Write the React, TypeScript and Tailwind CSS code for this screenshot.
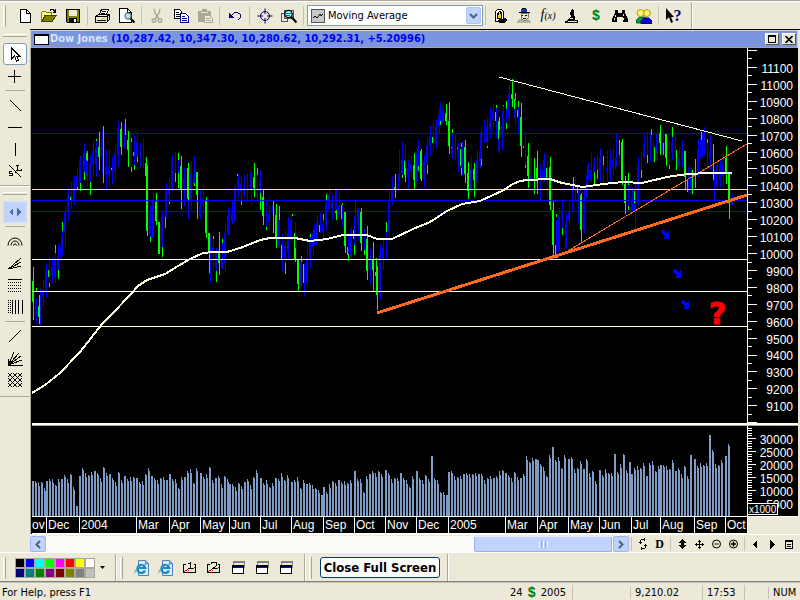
import { useState } from 'react';
import type { ReactNode } from 'react';

// high / low bars of the session, one "x,top,bottom" entry each
const UP_BARS = `
35,300,316 36,298,323 40,289,327 42,290,296 43,280,307 45,270,290 46,263,298 49,257,283 51,266,275 52,257,283
54,260,277 55,253,283 57,257,270 58,243,270 60,247,257 61,237,262 62,231,255 64,212,232 65,206,246 67,196,212
68,190,221 71,182,209 73,182,202 74,176,205 76,176,188 77,169,188 79,161,184 80,156,183 83,153,175 84,143,172
86,160,176 87,161,187 89,165,181 90,156,182 92,151,164 93,140,176 95,148,164 96,139,177 101,134,156 102,130,174
105,167,175 106,150,189 108,167,175 109,149,185 112,157,185 114,153,170 115,146,180 117,128,156 118,121,167
124,124,148 125,135,148 131,142,167 134,136,165 136,142,156 137,131,157 140,143,167 143,138,168 149,210,235
150,205,237 152,201,237 153,193,239 161,217,245 162,212,247 165,190,217 166,183,218 168,188,194 169,177,202
171,159,191 172,155,191 175,152,173 178,158,173 184,168,206 183,178,190 188,200,219 190,173,199 191,161,210
194,156,185 193,173,184 199,206,216 200,190,219 203,185,214 202,199,204 210,237,283 213,236,268 212,248,252
215,253,267 216,248,271 222,243,269 221,259,268 224,233,263 225,223,271 227,215,235 228,208,235 229,210,235
231,213,221 232,201,224 234,187,221 235,184,221 237,180,189 238,174,197 241,177,201 240,184,192 244,175,197
243,187,196 247,173,200 250,172,190 251,169,205 253,177,188 257,175,200 259,179,193 260,170,193 266,202,227
269,205,231 268,214,222 272,205,213 278,221,246 279,220,248 281,245,260 282,234,271 285,230,263 284,246,258
288,217,259 287,233,252 290,220,240 291,215,244 295,222,248 300,262,285 301,262,287 304,263,296 306,258,283
307,244,286 309,240,259 310,237,268 312,233,247 313,229,255 314,225,245 316,222,245 317,215,245 320,213,233
323,220,244 322,224,232 325,204,226 326,200,231 328,195,210 329,187,210 332,194,220 331,201,208 335,190,210
336,190,210 338,205,215 339,193,220 342,203,227 348,234,254 350,230,256 351,226,261 354,216,245 355,201,240
357,210,225 358,208,241 364,229,250 369,259,270 370,249,284 379,253,296 380,244,300 382,248,258 383,240,270
386,232,261 388,200,232 389,193,242 391,190,200 392,176,205 398,174,190 399,150,182 401,160,173 402,142,175
404,160,170 405,145,168 407,168,177 408,160,189 411,156,177 410,164,171 416,153,182 417,148,182 418,140,166
423,160,179 424,155,187 426,145,163 427,138,165 429,136,147 430,126,156 433,122,150 435,125,144 436,120,148
438,115,127 439,107,133 440,102,121 442,109,123 443,102,123 452,133,159 451,147,154 455,135,161 457,147,158
458,143,172 461,147,168 462,141,176 470,169,190 471,156,192 476,159,182 477,150,183 479,152,161 480,132,168
481,126,159 484,120,143 486,126,142 487,117,146 489,118,130 490,107,138 492,111,120 493,103,127 496,107,138
498,139,151 499,130,154 501,126,137 502,111,150 503,105,135 506,109,123 508,94,117 509,84,127 515,100,125
514,109,118 518,107,133 525,133,165 531,157,183 530,175,180 540,163,200 542,170,180 543,160,180 544,153,182
547,160,197 556,220,255 558,215,251 559,208,251 562,201,228 561,211,219 565,222,247 566,214,249 568,211,220
569,203,228 572,183,212 575,176,202 578,190,224 583,203,230 584,190,233 586,175,198 587,165,198 588,162,180
590,170,180 591,153,182 594,158,172 593,165,173 597,155,170 599,158,173 600,149,182 603,165,183 606,168,172
607,151,183 610,150,183 609,160,174 613,148,175 612,160,167 615,158,170 616,134,167 619,155,165 628,185,206
632,187,211 631,198,210 635,183,229 637,166,203 638,157,205 641,152,170 643,145,158 644,135,158 647,132,155
650,132,162 651,129,145 653,140,162 656,134,153 657,128,162 662,142,152 663,129,155 669,141,165 672,137,160
671,142,152 675,132,157 679,147,172 678,158,166 682,140,168 681,152,160 688,167,193 691,167,195 690,177,188
697,149,175 698,140,177 700,138,158 702,132,157 703,130,150 704,127,155 707,139,170 710,135,170 709,150,158
714,170,202 716,165,186 717,160,190 719,166,180 720,159,187 723,154,187 722,162,176 731,200,205 732,194,205
559,240,251 634,203,211 667,140,150`;

const DOWN_BARS = `
32,281,302 33,267,320 36,288,292 38,306,317 39,295,324 49,283,287 48,270,277 55,245,253 58,270,279 62,222,231
70,197,201 77,187,189 80,183,191 84,172,180 86,153,160 87,151,161 90,182,195 96,139,141 98,147,157 99,132,170
103,126,183 111,168,170 120,129,147 121,122,155 125,119,135 127,140,150 128,131,167 131,138,142 131,167,172
133,152,156 134,165,170 137,157,162 145,163,176 146,157,231 147,165,236 150,237,242 155,202,221 156,193,225
158,222,254 159,222,254 162,247,257 165,217,228 169,202,204 175,173,182 178,153,160 178,173,188 180,166,189
181,156,209 187,168,199 188,163,200 194,183,186 196,172,195 197,172,219 205,201,233 206,197,238 208,233,253
209,233,273 213,236,239 216,271,282 218,253,263 219,232,275 222,239,243 241,201,205 237,174,176 253,177,188
254,163,197 257,168,175 260,193,210 262,197,216 263,190,225 266,227,230 273,201,233 275,215,237 276,204,248
279,206,220 281,245,259 285,263,274 292,214,216 294,233,259 295,248,262 297,260,284 298,260,291 301,256,262
303,264,283 310,234,237 319,225,232 323,214,220 326,194,200 335,211,213 336,210,220 341,205,219 342,203,205
344,212,246 345,212,253 347,247,255 348,254,261 353,230,239 354,245,255 360,212,243 361,208,251 364,250,255
366,239,271 367,226,280 372,260,270 373,242,291 375,272,276 376,258,295 377,266,310 386,222,232 395,174,198
394,187,190 402,175,178 404,161,175 405,168,182 413,165,180 414,153,189 418,166,171 420,151,179 421,149,181
427,165,174 432,137,143 440,121,125 445,113,121 446,104,125 448,121,146 449,102,154 452,129,133 451,147,148
457,148,149 460,149,166 461,143,147 461,168,175 464,147,174 465,140,183 467,173,191 468,162,199 473,169,180
474,163,197 481,159,166 487,146,148 495,112,121 496,105,108 498,121,139 499,117,130 503,105,106 506,101,109
506,123,129 511,94,99 512,79,107 514,99,109 515,93,100 517,110,117 518,101,107 520,117,146 521,103,157
523,146,148 525,165,168 527,156,176 528,143,188 534,158,194 536,168,180 537,151,194 546,168,180 549,167,205
550,157,210 552,210,245 553,201,256 555,245,255 556,214,217 562,228,235 573,177,190 577,187,193 580,195,230
581,193,242 594,172,185 597,170,179 603,156,165 619,140,155 621,142,180 622,139,185 624,184,203 625,176,214
628,173,185 628,206,210 634,191,203 641,170,178 647,155,163 651,129,135 654,147,162 660,125,155 659,133,143
663,143,155 665,134,158 666,134,166 669,165,169 672,127,137 676,150,170 684,151,177 685,151,189 687,180,192
692,170,194 695,159,188 701,132,140 707,139,143 713,144,180 725,158,173 726,146,184 728,173,203 729,173,219`;

const toPath = (bars: string) =>
    bars
        .trim()
        .split(/\s+/)
        .map((bar) => {
            const [x, top, bottom] = bar.split(',').map(Number);
            return `M${x + 0.5} ${top}V${bottom}`;
        })
        .join('');

const MOVING_AVERAGE =
    '32,393 45,385 60,373 80,352 102,324 113,313 130,295 138,286 147,280 165,274 178,266 190,259 203,253 213,252 227,252 243,247 260,240 270,238 295,238 310,241 327,239 343,235 367,235 377,239 392,239 413,229 430,222 447,211 462,204 480,201 502,191 513,184 520,181 527,180 550,179 562,183 583,187 603,184 623,182 642,183 667,177 687,174 710,173 732,173';

interface Month {
    label: string;
    start: number;
    end: number;
    volume: number[];
}

const MONTHS: Month[] = [
    { label: 'ov', start: 32, end: 46, volume: [35, 35, 34, 34, 28] },
    { label: 'Dec', start: 46, end: 79, volume: [35, 37, 37, 31, 37, 37, 41, 37, 42, 29, 10] },
    { label: '2004', start: 79, end: 136, volume: [40, 48, 43, 41, 44, 45, 43, 38, 49, 43, 42, 38, 34, 44, 36, 40, 37, 39, 39] },
    { label: 'Mar', start: 136, end: 169, volume: [38, 34, 35, 42, 48, 40, 38, 36, 38, 39, 36] },
    { label: 'Apr', start: 169, end: 200, volume: [42, 37, 37, 28, 39, 39, 45, 47, 33, 48] },
    { label: 'May', start: 200, end: 229, volume: [43, 39, 42, 49, 36, 38, 40, 32, 40, 37] },
    { label: 'Jun', start: 229, end: 260, volume: [32, 32, 29, 33, 30, 34, 37, 31, 39, 46] },
    { label: 'Jul', start: 260, end: 291, volume: [38, 33, 36, 29, 33, 38, 37, 43, 36, 41] },
    { label: 'Aug', start: 291, end: 323, volume: [34, 36, 39, 28, 36, 32, 33, 31, 28, 26, 21] },
    { label: 'Sep', start: 323, end: 354, volume: [29, 24, 32, 35, 33, 36, 34, 35, 33, 36] },
    { label: 'Oct', start: 354, end: 385, volume: [45, 37, 37, 24, 40, 42, 45, 43, 45, 42] },
    { label: 'Nov', start: 385, end: 416, volume: [46, 43, 37, 38, 38, 43, 38, 36, 29, 40] },
    { label: 'Dec', start: 416, end: 448, volume: [45, 38, 36, 41, 37, 60, 38, 36, 24, 24, 21] },
    { label: '2005', start: 448, end: 505, volume: [44, 45, 40, 39, 40, 42, 43, 42, 42, 43, 42, 42, 36, 38, 40, 38, 40, 45, 46] },
    { label: 'Mar', start: 505, end: 537, volume: [43, 41, 38, 44, 39, 38, 42, 60, 54, 58, 57] },
    { label: 'Apr', start: 537, end: 568, volume: [56, 52, 49, 40, 61, 69, 56, 59, 48, 61] },
    { label: 'May', start: 568, end: 599, volume: [57, 59, 47, 48, 55, 47, 57, 43, 45, 35] },
    { label: 'Jun', start: 599, end: 631, volume: [46, 41, 47, 43, 43, 62, 44, 52, 62, 46, 54] },
    { label: 'Jul', start: 631, end: 660, volume: [42, 48, 50, 48, 53, 40, 53, 55, 45, 50] },
    { label: 'Aug', start: 660, end: 694, volume: [51, 51, 50, 47, 56, 45, 48, 42, 50, 40, 61] },
    { label: 'Sep', start: 694, end: 725, volume: [57, 50, 53, 51, 53, 81, 66, 52, 51, 56] },
    { label: 'Oct', start: 725, end: 747, volume: [60, 72] },
];

const VOLUME_PATH = MONTHS.map(({ start, volume }) =>
    volume
        .map((v, i) => {
            const x = start + i * 3 + 0.5;
            return `M${x} 90v-${v}M${x + 1} 90v-${v - ((i * 7) % 5)}`;
        })
        .join('')
).join('');

const MONTH_COLUMNS = MONTHS.map((m) => `minmax(0,${m.end - m.start}fr)`).join(' ');

const PRICES = Array.from({ length: 21 }, (_, i) => 11100 - i * 100);
const PRICE_TICKS = Array.from({ length: 45 }, (_, i) => {
    const y = Math.round(50 + i * 8.46);
    return `M0 ${y + 0.5}h${i % 2 ? 4 : 9}`;
}).join('');
const VOLUME_TICKS = Array.from({ length: 31 }, (_, i) => `M0 ${Math.round(12 + (i - 4) * 2.6) + 0.5}h${i % 5 === 4 ? 8 : 4}`).join('');

const SWATCHES = [
    ['Black', 'bg-[#000000]'],
    ['Blue', 'bg-[#0000ff]'],
    ['Cyan', 'bg-[#00ffff]'],
    ['Lime', 'bg-[#00ff00]'],
    ['Magenta', 'bg-[#ff00ff]'],
    ['Red', 'bg-[#ff0000]'],
    ['Yellow', 'bg-[#ffff00]'],
    ['White', 'bg-[#ffffff]'],
    ['Navy', 'bg-[#000080]'],
    ['Teal', 'bg-[#008080]'],
    ['Green', 'bg-[#008000]'],
    ['Purple', 'bg-[#800080]'],
    ['Maroon', 'bg-[#800000]'],
    ['Olive', 'bg-[#808000]'],
    ['Gray', 'bg-[#808080]'],
    ['Silver', 'bg-[#c0c0c0]'],
];

function Icon({ children, smooth }: { children: ReactNode; smooth?: boolean }) {
    return (
        <svg width="16" height="16" viewBox="0 0 16 16" fill="none" stroke="#000" shapeRendering={smooth ? 'auto' : 'crispEdges'} aria-hidden="true">
            {children}
        </svg>
    );
}

function Tool({ label, children }: { label: string; children: ReactNode }) {
    return (
        <button type="button" aria-label={label} title={label} className="w-6 h-6 shrink-0 flex items-center justify-center">
            {children}
        </button>
    );
}

function SmallTool({ label, children }: { label: string; children: ReactNode }) {
    return (
        <button type="button" aria-label={label} title={label} className="w-[17px] h-4 shrink-0 flex items-center justify-center">
            {children}
        </button>
    );
}

function Sep() {
    return <div className="w-px h-[19px] ml-[2px] mr-[3px] shrink-0 bg-[#c5c2b8]" />;
}

function Grip() {
    return <div className="w-[3px] h-[22px] shrink-0 border-l border-white border-r border-r-[#aca899]" />;
}

function WindowIcon() {
    return (
        <Icon>
            <path d="M3 1.500h12M3 2.500h12M14.500 3v5M3.500 2v3" stroke="#808080" />
            <path d="M2.500 5.500h11v8h-11z" fill="#fff" />
            <path d="M2 6.500h12" />
            <path d="M3 7.500h10" stroke="#00f" />
        </Icon>
    );
}

function BrowserIcon() {
    return (
        <Icon smooth>
            <path d="M4.500 .5h7l3 3v12h-10z" fill="#d8ecfa" stroke="#5580b8" />
            <path d="M11.500 .5v3h3" stroke="#5580b8" />
            <path d="M11 10.500a4 4 0 1 1 .2-2.500H4.500" stroke="#1b83c8" strokeWidth="2.200" />
            <path d="M.8 13C1 9 7 4 13 4" stroke="#4aa9e0" />
        </Icon>
    );
}

function NumberedChart({ n }: { n: string }) {
    return (
        <Icon>
            <path d="M2 11.500h1M3 10.500h2M5 9.500h1M6 10.500h1M11 8.500h1M12 7.500h1" stroke="#f00" />
            <path d="M4 4.500H1.500v8h12v-8H12" />
            {n === '1' ? <path d="M6 3.500h2M8.500 2v6M6 8.500h5" /> : <path d="M5.500 4V2.500h5v3M9 6.500h1M7 7.500h2M6 8.500h5" />}
        </Icon>
    );
}

function TopToolbar() {
    const [indicator, setIndicator] = useState('Moving Average');

    return (
        <header className="h-[29px] shrink-0 flex items-center border-t border-[#aca899] shadow-[inset_0_1px_0_#fff] pl-[3px] pt-px overflow-hidden">
            <Grip />
            <div className="w-[7px] shrink-0" />
            <Tool label="New">
                <Icon>
                    <path d="M3.500 1.500h6l4 4v9h-10zM9.500 1.500v4h4" fill="#fff" />
                </Icon>
            </Tool>
            <Tool label="Open">
                <Icon>
                    <path d="M.5 13V4.500l1-1h3l1 1h5V8H4z" fill="#ffff80" stroke="#808000" />
                    <path d="M1 13.500L4 7.500h11l-4 6z" fill="#808000" stroke="#404000" />
                    <path d="M9 2.500l1-1h2l2 2M14.500 1v3H12" />
                </Icon>
            </Tool>
            <Tool label="Save">
                <Icon>
                    <path d="M1.500 1.500h13v13h-12l-1-1z" fill="#808000" />
                    <path d="M4 2h8v6H4z" fill="#ece9d8" stroke="none" />
                    <path d="M4 10h8v4H4z" fill="#000" stroke="none" />
                    <path d="M9 11h2v3H9z" fill="#fff" stroke="none" />
                </Icon>
            </Tool>
            <Sep />
            <Tool label="Print">
                <Icon>
                    <path d="M4.500 6l2-4.500h7l-2 5" fill="#fff" />
                    <path d="M7 3.500h4M6 5.500h4" />
                    <path d="M.5 8.500l3-2h11v5l-3 3H.5z" fill="#ece9d8" />
                    <path d="M1 8.500h11v5M12 8.500l2-2M2 12.500h9" />
                    <path d="M7 10.500h3" stroke="#cc0" />
                </Icon>
            </Tool>
            <Tool label="Print preview">
                <Icon>
                    <path d="M.5 .5h8l4 4v10H.5zM8.500 .5v4h4" fill="#fff" />
                    <g shapeRendering="auto">
                        <circle cx="9" cy="8" r="3.200" fill="#aee8ee" stroke="#555" />
                        <path d="M11.500 10.500l4 4" strokeWidth="2.200" />
                    </g>
                </Icon>
            </Tool>
            <Sep />
            <Tool label="Cut">
                <Icon smooth>
                    <path d="M5 1l1 4 4 6M11 1l-1 4-4 6" stroke="#aca899" strokeWidth="1.400" />
                    <circle cx="5" cy="12.500" r="1.800" stroke="#aca899" strokeWidth="1.400" />
                    <circle cx="11" cy="12.500" r="1.800" stroke="#aca899" strokeWidth="1.400" />
                </Icon>
            </Tool>
            <Tool label="Copy">
                <Icon>
                    <path d="M1.500 1.500h5l2 2v7h-7z" fill="#fff" />
                    <path d="M3 4.500h3M3 6.500h4M3 8.500h4" />
                    <path d="M7.500 5.500h5l3 3v6h-8z" fill="#fff" stroke="#000080" />
                    <path d="M9 8.500h3M9 10.500h5M9 12.500h5" stroke="#000080" />
                </Icon>
            </Tool>
            <Tool label="Paste">
                <Icon>
                    <path d="M1 3h13v11H1zM5 1h5v2H5z" fill="#aca899" stroke="none" />
                    <path d="M4 4.500h7" stroke="#ece9d8" />
                    <path d="M7.500 7.500h5l3 3v4h-8z" fill="#ece9d8" stroke="#aca899" />
                    <path d="M9 10.500h4M9 12.500h5" stroke="#aca899" />
                </Icon>
            </Tool>
            <Sep />
            <Tool label="Undo">
                <Icon>
                    <path d="M2 5v5h5z" fill="#000080" stroke="none" />
                    <path d="M4 7.500h1M5 6.500h1M6 5.500h1M7 4.500h4M11 5.500h2M13.500 6v4M12 10.500h1M11 11.500h1" stroke="#000080" />
                </Icon>
            </Tool>
            <Sep />
            <Tool label="Crosshair">
                <Icon smooth>
                    <circle cx="8" cy="8" r="4.500" stroke="#000060" />
                    <path d="M8 .5v5.500M8 10v5.500M.5 8H6M10 8h5.500" stroke="#000060" />
                </Icon>
            </Tool>
            <Tool label="Zoom to data">
                <Icon>
                    <path d="M.5 5.500h6v8h-6zM3.500 2.500h9v8h-9z" fill="#ece9d8" stroke="#555" />
                    <g shapeRendering="auto">
                        <circle cx="7.500" cy="6" r="3.700" fill="#9ff" strokeWidth="1.300" />
                        <path d="M10.500 9l5 5.500" strokeWidth="2.200" />
                    </g>
                    <path d="M5 5.500h5M5 7.500h4" stroke="#088" />
                </Icon>
            </Tool>
            <Sep />
            <div className="relative w-[176px] h-[21px] shrink-0 flex items-center">
                <select
                    aria-label="Indicator"
                    value={indicator}
                    onChange={(e) => setIndicator(e.target.value)}
                    className="appearance-none w-full h-full pl-[20px] pr-5 bg-white border border-[#7f9db9] leading-4 font-['DejaVu_Sans_Condensed','DejaVu_Sans',sans-serif] text-[11px]"
                >
                    <option>Moving Average</option>
                    <option>Bollinger Bands</option>
                    <option>MACD</option>
                </select>
                <span className="absolute left-1 w-[14px] h-[14px] border border-[#555] bg-[#c8c8c8] flex items-center justify-center pointer-events-none">
                    <svg width="12" height="10" viewBox="0 0 12 10" fill="none" stroke="#000" aria-hidden="true">
                        <path d="M1 7l2-2 2 2 3-4 1 2 2-2" />
                    </svg>
                </span>
                <span className="absolute right-[2px] w-[15px] h-[17px] bg-[#c1d3fb] border border-[#b0c4f0] rounded-[2px] flex items-center justify-center pointer-events-none">
                    <svg width="9" height="6" viewBox="0 0 9 6" fill="none" stroke="#4d6185" strokeWidth="2" aria-hidden="true">
                        <path d="M1 1l3.500 3.500L8 1" />
                    </svg>
                </span>
            </div>
            <div className="w-px h-[19px] mx-[2px] shrink-0 bg-[#c5c2b8]" />
            <Tool label="Security">
                <Icon>
                    <path d="M3.500 13.500v-10l2-2h4l2 2v10z" fill="#fff" />
                    <path d="M5 11V5l2-2h1l2 2v6z" fill="#000" stroke="none" />
                    <path d="M7 4h1v2h1v4H6V7h1z" fill="#fc0" stroke="none" />
                    <path d="M7 11h4v-1h3l1 2-2 3H7l-2-2z" fill="#000" stroke="none" />
                </Icon>
            </Tool>
            <Tool label="Expert">
                <Icon>
                    <path d="M1 15v-2l3-2h8l3 2v2z" fill="#b5b2a5" stroke="none" />
                    <path d="M5 5h7v5l-2 2H7l-2-2z" fill="#e8e4d0" stroke="#777" />
                    <path d="M5 1h6v3H5z" fill="#1838a8" stroke="none" />
                    <path d="M3 4.500h11M6 .5h4M6 7.500h1M9 7.500h2M7 10.500h3" />
                </Icon>
            </Tool>
            <Tool label="Formula">
                <span className="font-['Liberation_Serif',serif] italic text-sm leading-4">
                    f<span className="text-[10px]">(x)</span>
                </span>
            </Tool>
            <Tool label="Explorer">
                <Icon>
                    <path d="M8 1l2 2v4l1 2v3h3v3H1v-2h2l2-3 2-2-1-3z" fill="#000" stroke="none" />
                    <path d="M6 10.500h3M4 13.500h9" stroke="#ece9d8" />
                </Icon>
            </Tool>
            <Tool label="Quotes">
                <span className="font-['Liberation_Mono',monospace] font-bold text-sm leading-4 text-[#008000]">$</span>
            </Tool>
            <Tool label="Find">
                <Icon>
                    <path d="M3 2h3v3h4V2h3v3l3 6v3h-5V9H5v5H0v-3l3-6z" fill="#000" stroke="none" />
                    <path d="M3.500 7v2M2.500 10v2M11.500 6v2M11.500 10v2" stroke="#ece9d8" />
                </Icon>
            </Tool>
            <Tool label="Community">
                <Icon>
                    <g shapeRendering="auto">
                        <path d="M.5 15v-3l3-3h5l3 3v3z" fill="#00a040" stroke="#006020" />
                        <path d="M5 15.500V13l3-3h5l3 3v2.500z" fill="#0000d0" stroke="#000080" />
                        <circle cx="4.500" cy="5" r="3.500" fill="#fff36a" stroke="#b0a000" />
                        <circle cx="11" cy="5" r="3.500" fill="#fff36a" stroke="#b0a000" />
                    </g>
                </Icon>
            </Tool>
            <div className="w-px h-[19px] mx-[2px] shrink-0 bg-[#c5c2b8]" />
            <Tool label="Context help">
                <span className="flex items-center">
                    <svg width="9" height="16" viewBox="0 0 9 16" aria-hidden="true">
                        <path d="M1 0v12l3-3 2 6 2-1-2-5h3z" />
                    </svg>
                    <span className="font-['Liberation_Serif',serif] font-bold text-base leading-4 text-[#000080]">?</span>
                </span>
            </Tool>
            <div className="w-[2px] h-[27px] ml-[6px] shrink-0 border-l border-[#aca899] bg-white" />
        </header>
    );
}

const LINE_TOOLS: { label: string; icon: ReactNode; after?: boolean }[] = [
    { label: 'Crosshair pointer', icon: <path d="M7.500 2v13M1 8.500h13" />, after: true },
    { label: 'Trend line', icon: <path d="M3 3l11 11" /> },
    { label: 'Horizontal line', icon: <path d="M1 8.500h14" /> },
    { label: 'Vertical line', icon: <path d="M8.500 2v13" /> },
    { label: 'Stop loss', icon: <path d="M2 2l12 12M10.500 2v5M9 2.500h3M9 7.500h5v-2M5 8.500H2.500v2h3v2H2M9 9l-1 1" /> },
];

const STUDY_TOOLS: { label: string; icon: ReactNode; after?: boolean }[] = [
    {
        label: 'Fibonacci arcs',
        icon: (
            <g shapeRendering="auto">
                <path d="M1 12.500a7 7.500 0 0 1 14 0M4 12.500a4 4.500 0 0 1 8 0M6.500 12.500a1.500 1.500 0 0 1 3 0" />
            </g>
        ),
    },
    { label: 'Fibonacci fan', icon: <path d="M1.500 14L14 3M1.500 14L14 7M1.500 14L14 11" /> },
    {
        label: 'Fibonacci retracement',
        icon: (
            <>
                <path d="M1 2.500h14" />
                <path d="M1 5.500h14M1 8.500h14M1 11.500h14M1 14.500h14" strokeDasharray="1 1" />
            </>
        ),
    },
    {
        label: 'Time zones',
        icon: (
            <>
                <path d="M1.500 1v14M3.500 1v14" strokeDasharray="1 1" />
                <path d="M5.500 1v14M8.500 1v14M11.500 1v14M15.500 1v14" />
            </>
        ),
        after: true,
    },
    { label: 'Gann line', icon: <path d="M2 14L14 2" /> },
    { label: 'Gann fan', icon: <path d="M1 15.500h15M1.500 15L15 10M1.500 15L14 6M1.500 15L12 3M1.500 15L7 2M1.500 15V9" /> },
    { label: 'Gann grid', icon: <path d="M1 5l4-4M1 10L10 1M1 15L15 1M6 15l9-9M11 15l4-4M1 11l4 4M1 6l9 9M1 1l14 14M6 1l9 9M11 1l4 4" /> },
];

function ToolColumn({ items }: { items: typeof LINE_TOOLS }) {
    return (
        <>
            {items.map((item) => (
                <div key={item.label}>
                    <button type="button" aria-label={item.label} title={item.label} className="w-6 h-[22px] flex items-center justify-center">
                        <Icon>{item.icon}</Icon>
                    </button>
                    {item.after && <div className="h-px w-5 mx-[2px] my-[3px] bg-[#aca899]" />}
                </div>
            ))}
        </>
    );
}

function SideToolbar() {
    return (
        <nav aria-label="Drawing tools" className="w-[30px] shrink-0 pt-[5px] overflow-hidden">
            <div className="pl-[3px] pb-[3px] border-b border-[#aca899]">
                <div className="w-6 h-[3px] border-t border-white border-b border-b-[#aca899]" />
                <button
                    type="button"
                    aria-label="Select"
                    title="Select"
                    className="w-6 h-[22px] mt-[6px] bg-white border border-[#7f9db9] rounded-[3px] flex items-center justify-center"
                >
                    <Icon>
                        <path d="M4.500 2v11l3-3 2 5 2-1-2-4h3z" fill="#fff" />
                    </Icon>
                </button>
                <ToolColumn items={LINE_TOOLS} />
            </div>
            <div className="pl-[3px] pt-[5px] pb-[5px] border-t border-white border-b border-b-[#aca899]">
                <div className="w-6 h-[3px] border-t border-white border-b border-b-[#aca899]" />
                <button
                    type="button"
                    aria-label="Scroll mode"
                    title="Scroll mode"
                    className="w-6 h-[22px] mt-[6px] bg-[#c1d3fb] border border-[#d5e0fb] rounded-[2px] flex items-center justify-center"
                >
                    <Icon>
                        <path d="M6 4v8L2 8zM10 4v8l4-4z" fill="#4d6fa5" stroke="none" />
                    </Icon>
                </button>
                <div className="h-px w-5 mx-[2px] my-[3px] bg-[#aca899]" />
                <ToolColumn items={STUDY_TOOLS} />
            </div>
        </nav>
    );
}

function Arrow() {
    return (
        <svg width="9" height="9" viewBox="0 0 9 9" fill="#00f" shapeRendering="crispEdges" aria-hidden="true">
            <path d="M1 0h2v1h1v1h1v1h1V2h1V1h1v8H2V8h1V7h1V6H3V5H2V4H1V3H0V1h1z" />
        </svg>
    );
}

function PriceChart() {
    return (
        <div className="flex-1 min-h-0 flex">
            <div className="relative flex-1 min-w-0">
                <svg
                    className="absolute inset-0 w-full h-full"
                    viewBox="32 48 715 375"
                    preserveAspectRatio="none"
                    fill="none"
                    shapeRendering="crispEdges"
                    role="img"
                    aria-label="Dow Jones daily price"
                >
                    <path d="M32 133.500h715M32 211.500h715" stroke="#00f" />
                    <path d={toPath(UP_BARS)} stroke="#00f" />
                    <path d={toPath(DOWN_BARS)} stroke="#0f0" />
                    <path d="M32 189.500h715" stroke="#ff0" />
                    <path d="M32 200.500h715" stroke="#00f" />
                    <path d="M32 259.500h715M32 291.500h715M32 326.500h715" stroke="#ffffe8" />
                    <path d="M499 77L742 141" stroke="#ffffe8" />
                    <path d="M556 258L747 144" stroke="#ff6a20" />
                    <path d="M377 313L747 195" stroke="#ff6a20" strokeWidth="3" />
                    <polyline points={MOVING_AVERAGE} stroke="#ffffe8" strokeWidth="2" />
                </svg>
                <span className="absolute left-[88%] top-[48.500%]">
                    <Arrow />
                </span>
                <span className="absolute left-[89.600%] top-[58.800%]">
                    <Arrow />
                </span>
                <span className="absolute left-[90.700%] top-[67.300%]">
                    <Arrow />
                </span>
                <span className="absolute left-[94.700%] top-[67.300%] font-['DejaVu_Sans',sans-serif] font-bold text-[30px] leading-[28px] text-[#f00] [-webkit-text-stroke:1px_#f00]">
                    ?
                </span>
            </div>
            <div className="w-[51px] shrink-0 flex border-l border-white">
                <svg className="w-[9px] h-full shrink-0" viewBox="0 48 9 375" preserveAspectRatio="none" stroke="#fff" shapeRendering="crispEdges" aria-hidden="true">
                    <path d={PRICE_TICKS} />
                </svg>
                <div className="flex-1 flex flex-col pt-[13px] pb-[7px] pr-[5px] text-right text-xs leading-4 text-white">
                    {PRICES.map((price) => (
                        <div key={price} className="flex-1 min-h-0">
                            {price}
                        </div>
                    ))}
                </div>
            </div>
        </div>
    );
}

function VolumeChart() {
    return (
        <div className="h-[90px] shrink-0 flex">
            <svg
                className="flex-1 min-w-0 h-full"
                viewBox="32 0 715 90"
                preserveAspectRatio="none"
                stroke="#7d9dc6"
                shapeRendering="crispEdges"
                role="img"
                aria-label="Volume"
            >
                <path d={VOLUME_PATH} />
            </svg>
            <div className="relative w-[51px] shrink-0 flex border-l border-white">
                <svg className="w-[9px] h-full shrink-0" viewBox="0 0 9 90" stroke="#fff" shapeRendering="crispEdges" aria-hidden="true">
                    <path d={VOLUME_TICKS} />
                </svg>
                <div className="flex-1 pt-2 pr-[5px] text-right text-xs leading-[13px] text-white">
                    {[30000, 25000, 20000, 15000, 10000, 5000].map((v) => (
                        <div key={v}>{v}</div>
                    ))}
                </div>
                <span className="absolute left-0 bottom-px h-3 px-px border border-white border-l-0 bg-black text-white text-[10px] leading-[11px]">x1000</span>
            </div>
        </div>
    );
}

function ChartWindow() {
    return (
        <main className="flex-1 min-w-0 flex flex-col border-t border-black">
            <div className="h-[18px] shrink-0 mr-[2px] flex items-center bg-[#7b96df] border border-[#d8d4c4] border-b-[#aca899] pl-[3px] pr-px font-['DejaVu_Sans_Condensed','DejaVu_Sans',sans-serif] text-[11px] leading-4 font-bold whitespace-nowrap">
                <span className="w-[15px] h-[11px] shrink-0 bg-white border border-t-2 border-black" />
                <h1 className="flex-1 min-w-0 ml-px overflow-hidden">
                    <span className="text-[#d8e4f8]">Dow Jones </span>
                    <span className="text-[#0000f0]">(10,287.42, 10,347.30, 10,280.62, 10,292.31, +5.20996)</span>
                </h1>
                <div className="flex gap-[3px] shrink-0">
                    <button type="button" aria-label="Restore" className="w-[14px] h-3 bg-[#ece9d8] border border-white border-r-[#555] border-b-[#555] flex items-center justify-center">
                        <span className="w-2 h-2 border border-t-2 border-black" />
                    </button>
                    <button type="button" aria-label="Close" className="w-[14px] h-3 bg-[#ece9d8] border border-white border-r-[#555] border-b-[#555] flex items-center justify-center">
                        <svg width="8" height="7" viewBox="0 0 8 7" stroke="#000" strokeWidth="1.600" aria-hidden="true">
                            <path d="M.5 0l7 7M7.500 0l-7 7" />
                        </svg>
                    </button>
                </div>
            </div>
            <div className="flex-1 min-h-0 flex flex-col mr-[2px] pl-px bg-black border-l border-[#aca899] font-['Liberation_Sans',Arial,sans-serif]">
                <PriceChart />
                <div className="h-[3px] shrink-0 bg-[#fffff4] border-b border-[#aca899]" />
                <VolumeChart />
                <div className="h-[18px] shrink-0 flex border-t border-white">
                    <div style={{ gridTemplateColumns: MONTH_COLUMNS }} className="flex-1 min-w-0 grid border-b border-white text-xs leading-4 text-white">
                        {MONTHS.map((month) => (
                            <div key={month.start} className="overflow-hidden pl-px border-l border-white first:border-l-0 first:pl-0">
                                {month.label}
                            </div>
                        ))}
                    </div>
                    <div className="w-[51px] shrink-0 bg-[#ece9d8] border-l border-white" />
                </div>
            </div>
            <ScrollRow />
        </main>
    );
}

function ScrollRow() {
    return (
        <div className="h-[18px] shrink-0 flex items-center pt-px pr-[2px] border-t border-[#fffff4]">
            <div className="flex-1 min-w-0 h-full flex bg-[#fbfbf8]">
                <button type="button" aria-label="Scroll left" className="w-4 shrink-0 bg-[#c1d3fb] border border-[#9db5ee] rounded-[2px] flex items-center justify-center">
                    <svg width="6" height="9" viewBox="0 0 6 9" fill="none" stroke="#4d6185" strokeWidth="2" aria-hidden="true">
                        <path d="M5 1L1.500 4.500 5 8" />
                    </svg>
                </button>
                <div className="grow-[428] basis-0" />
                <div className="grow-[136] basis-0 bg-[#c1d3fb] border border-[#98b1ec] border-t-[#e5edff] rounded-[2px] flex items-center justify-center gap-px">
                    <span className="w-px h-[7px] bg-[#eef3ff]" />
                    <span className="w-px h-[7px] bg-[#8caaf0]" />
                    <span className="w-px h-[7px] bg-[#eef3ff]" />
                    <span className="w-px h-[7px] bg-[#8caaf0]" />
                    <span className="w-px h-[7px] bg-[#eef3ff]" />
                </div>
                <button type="button" aria-label="Scroll right" className="w-4 ml-px shrink-0 bg-[#c1d3fb] border border-[#9db5ee] rounded-[2px] flex items-center justify-center">
                    <svg width="6" height="9" viewBox="0 0 6 9" fill="none" stroke="#4d6185" strokeWidth="2" aria-hidden="true">
                        <path d="M1 1l3.500 3.500L1 8" />
                    </svg>
                </button>
            </div>
            <div className="flex items-center shrink-0">
                <div className="w-px h-[14px] mx-[2px] bg-[#c5c2b8]" />
                <SmallTool label="Refresh">
                    <Icon>
                        <path d="M10 3.500H6.500L5.500 5v3M4 6.500h3M6 12.500h3.500l1-1.500V8M9 9.500h3M9.500 2v3M6.500 11v3" />
                    </Icon>
                </SmallTool>
                <SmallTool label="Daily">
                    <span className="font-['Liberation_Serif',serif] font-bold text-xs leading-4">D</span>
                </SmallTool>
                <div className="w-px h-[14px] ml-[2px] mr-[3px] bg-[#c5c2b8]" />
                <SmallTool label="Vertical scale">
                    <Icon>
                        <path d="M7 3h1v1h1v1h1v1h1v1H9v2h2v1h-1v1H9v1H8v1H7v-1H6v-1H5v-1H4V9h2V7H4V6h1V5h1V4h1z" fill="#000" stroke="none" />
                    </Icon>
                </SmallTool>
                <SmallTool label="Move">
                    <Icon>
                        <path d="M7.500 4v9M3 8.500h9M6 5.500h3M6 11.500h3M4.500 7v3M10.500 7v3" />
                    </Icon>
                </SmallTool>
                <SmallTool label="Zoom out">
                    <Icon smooth>
                        <circle cx="7.500" cy="8" r="4" />
                        <path d="M5.500 8h4" />
                    </Icon>
                </SmallTool>
                <SmallTool label="Zoom in">
                    <Icon smooth>
                        <circle cx="7.500" cy="8" r="4" />
                        <path d="M5 8h5M7.500 5.500v5" strokeWidth="1.500" />
                    </Icon>
                </SmallTool>
                <div className="w-px h-[14px] mx-[2px] bg-[#c5c2b8]" />
                <SmallTool label="Previous">
                    <Icon>
                        <path d="M9 4v9L4.500 8.500z" fill="#000" stroke="none" />
                    </Icon>
                </SmallTool>
                <SmallTool label="Next">
                    <Icon>
                        <path d="M5 4v9l4.500-4.500z" fill="#000" stroke="none" />
                    </Icon>
                </SmallTool>
                <SmallTool label="Properties">
                    <Icon>
                        <path d="M3.500 4.500h7v8h-7zM3 5.500h8M5 8.500h4M5 10.500h4" />
                    </Icon>
                </SmallTool>
            </div>
        </div>
    );
}

function BottomToolbar() {
    return (
        <div className="h-[29px] shrink-0 flex items-center border-t border-white pl-[3px] pt-px overflow-hidden">
            <Grip />
            <div className="grid grid-cols-8 ml-[9px] w-20 shrink-0">
                {SWATCHES.map(([name, color]) => (
                    <button key={name} type="button" aria-label={name} className="w-[10px] h-[10px] p-px bg-[#aca899]">
                        <span className={`block w-2 h-2 ${color}`} />
                    </button>
                ))}
            </div>
            <button type="button" aria-label="More colors" className="w-[14px] h-5 shrink-0 flex items-center justify-center">
                <svg width="5" height="3" viewBox="0 0 5 3" aria-hidden="true">
                    <path d="M0 0h5L2.500 3z" />
                </svg>
            </button>
            <div className="w-[2px] h-[27px] ml-[6px] mr-[3px] shrink-0 border-l border-[#aca899] bg-white" />
            <Grip />
            <div className="flex ml-[7px] shrink-0">
                <Tool label="Browser 1">
                    <BrowserIcon />
                </Tool>
                <Tool label="Browser 2">
                    <BrowserIcon />
                </Tool>
                <Tool label="Chart layout 1">
                    <NumberedChart n="1" />
                </Tool>
                <Tool label="Chart layout 2">
                    <NumberedChart n="2" />
                </Tool>
                <Tool label="Window 1">
                    <WindowIcon />
                </Tool>
                <Tool label="Window 2">
                    <WindowIcon />
                </Tool>
                <Tool label="Window 3">
                    <WindowIcon />
                </Tool>
            </div>
            <div className="w-[2px] h-[27px] ml-[6px] mr-[3px] shrink-0 border-l border-[#aca899] bg-white" />
            <Grip />
            <button
                type="button"
                className="ml-2 w-[120px] h-[21px] shrink-0 bg-[#fdfdfb] border border-[#003c74] rounded-[3px] font-['DejaVu_Sans_Condensed','DejaVu_Sans',sans-serif] font-bold text-[13px] leading-4 whitespace-nowrap"
            >
                Close Full Screen
            </button>
            <div className="w-[2px] h-[27px] ml-[7px] shrink-0 border-l border-[#aca899] bg-white" />
        </div>
    );
}

function StatusBar() {
    return (
        <footer className="h-[19px] shrink-0 flex items-center border-t border-[#808080] shadow-[inset_0_1px_0_#c5c2b8] pl-[2px] pt-[3px] font-['DejaVu_Sans_Condensed','DejaVu_Sans',sans-serif] text-[11px] leading-4 whitespace-nowrap">
            <span className="flex-1 min-w-0 overflow-hidden">For Help, press F1</span>
            <span className="w-[63px] shrink-0 flex items-center justify-between pr-[6px] border-r border-[#c5c2b8]">
                24
                <span className="font-['Liberation_Mono',monospace] font-bold text-sm leading-4 text-[#008000]">$</span>
                2005
            </span>
            <span className="w-[58px] h-3 shrink-0 border-r border-[#c5c2b8]" />
            <span className="w-[72px] shrink-0 pl-1 border-r border-[#c5c2b8]">9,210.02</span>
            <span className="w-[42px] shrink-0 pl-1 border-r border-[#c5c2b8]">17:53</span>
            <span className="w-[24px] h-3 shrink-0 border-r border-[#c5c2b8]" />
            <span className="w-[31px] shrink-0 pl-1">NUM</span>
        </footer>
    );
}

export default function App() {
    return (
        <div className="h-screen flex flex-col overflow-hidden bg-[#ece9d8] text-black">
            <TopToolbar />
            <div className="flex-1 min-h-0 flex">
                <SideToolbar />
                <ChartWindow />
            </div>
            <BottomToolbar />
            <StatusBar />
        </div>
    );
}
